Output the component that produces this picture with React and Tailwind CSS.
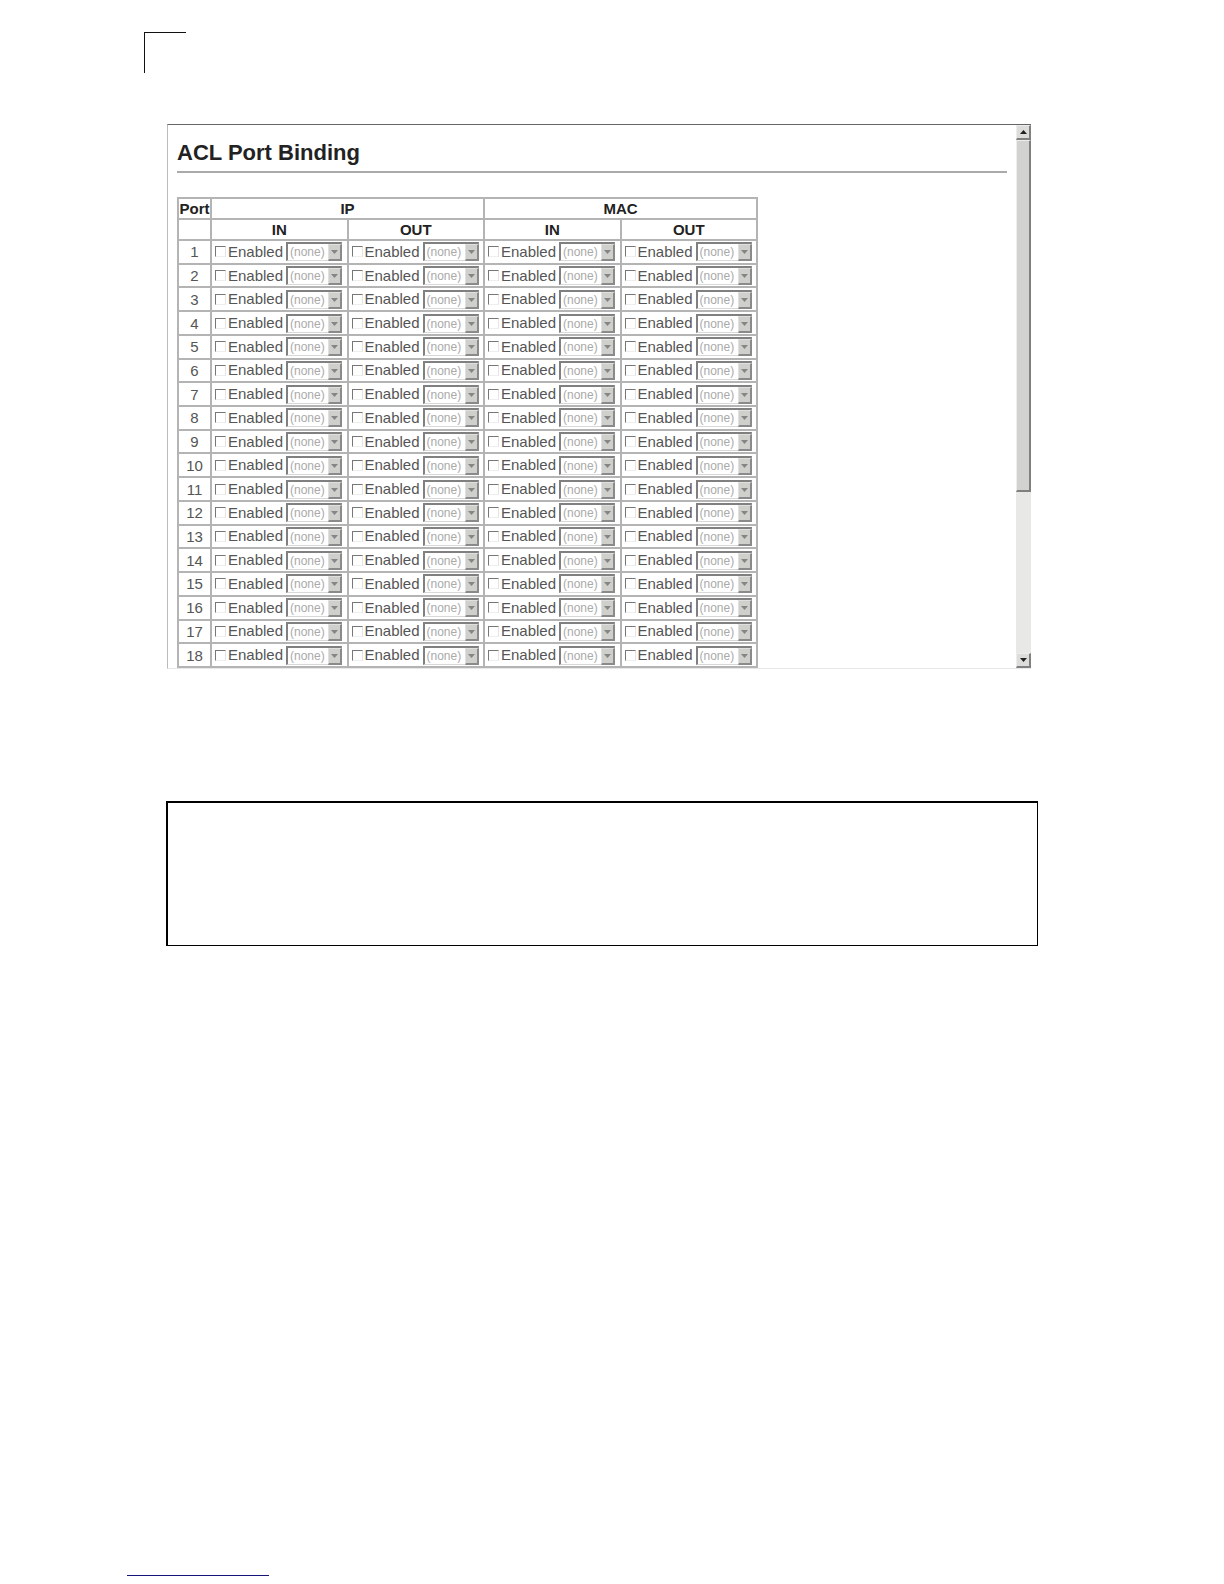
const PORTS = Array.from({ length: 18 }, (_, i) => i + 1)

const GROUPS = [
  { type: 'IP', directions: ['IN', 'OUT'] },
  { type: 'MAC', directions: ['IN', 'OUT'] },
]

const COLUMNS = GROUPS.flatMap(g => g.directions.map(d => ({ type: g.type, direction: d })))

const Arrow = ({ up = false, className }) => (
  <svg viewBox="0 0 7 4" className={className} aria-hidden="true">
    <path d={up ? 'M0 4 L3.5 0 L7 4 Z' : 'M0 0 L7 0 L3.5 4 Z'} fill="currentColor" />
  </svg>
)

const Binding = ({ port, type, direction }) => {
  const name = `${type}-${direction}-${port}`
  return (
    <div className="flex items-center pl-[3px]">
      <label className="flex items-center gap-[2px] leading-5">
        <input
          type="checkbox"
          name={name}
          className="size-[11px] appearance-none border border-t-[#777] border-l-[#777] border-r-[#e4e4e4] border-b-[#eee] bg-white checked:bg-[#555]"
        />
        <span className="w-[58px]">Enabled</span>
      </label>
      <div className="relative">
        <select
          disabled
          aria-label={`${type} ${direction} ACL for port ${port}`}
          className="block h-[19px] w-14 appearance-none border-t-2 border-r border-b border-l-2 border-t-[#808080] border-l-[#808080] border-r-[#a0a0a0] border-b-[#d8d8d8] bg-white pl-[2px] text-xs leading-[14px] text-[#aaa] opacity-100"
        >
          <option>(none)</option>
        </select>
        <span className="pointer-events-none absolute top-[2px] right-0 bottom-0 flex w-[14px] items-center justify-center border-t border-r-2 border-b-2 border-l border-t-[#e0e0e0] border-l-[#e0e0e0] border-r-[#8a8a8a] border-b-[#8a8a8a] bg-[#cfcfcb] text-[#858585]">
          <Arrow className="h-1 w-[7px]" />
        </span>
      </div>
    </div>
  )
}

const ScrollButton = ({ up, label }) => (
  <button
    type="button"
    aria-label={label}
    className="flex h-[15px] shrink-0 items-center justify-center border border-t-[#ededed] border-l-[#ededed] border-r-2 border-r-[#808080] border-b-2 border-b-[#808080] bg-[#dcdcda] text-[#222]"
  >
    <Arrow up={up} className="h-1 w-[7px]" />
  </button>
)

export default function App() {
  return (
    <main className="bg-white pt-8 pb-2 font-['Liberation_Sans',Arial,sans-serif] text-[15px] text-[#555]">
      {/* Crop mark */}
      <div className="ml-36 h-[41px] w-[42px] border-t border-l border-[#111]" />

      {/* Browser frame */}
      <section className="mt-[51px] mr-[193px] ml-[167px] flex h-[545px] overflow-hidden border-t border-l border-t-[#666] border-l-[#bbb] border-b border-b-[#e8e8e8]">
        <div className="min-w-0 flex-1 pt-[15px] pr-[9px] pl-[9px]">
          <h1 className="border-b-2 border-[#aaa] pb-[6px] text-[22px] leading-[25px] font-bold text-[#222]">ACL Port Binding</h1>

          <table className="mt-6 h-[471px] w-[581px] table-fixed border-collapse border-2 border-[#b4b4b4]">
            <colgroup>
              <col className="w-[33px]" />
              {COLUMNS.map(c => <col key={c.type + c.direction} />)}
            </colgroup>
            <thead className="text-[#222]">
              <tr className="h-[21px]">
                <th className="border-2 border-[#b4b4b4] p-0 leading-[19px]">Port</th>
                {GROUPS.map(g => (
                  <th key={g.type} colSpan={2} className="border-2 border-[#b4b4b4] p-0 leading-[19px]">{g.type}</th>
                ))}
              </tr>
              <tr className="h-[21px]">
                <th className="border-2 border-[#b4b4b4] p-0" />
                {COLUMNS.map(c => (
                  <th key={c.type + c.direction} className="border-2 border-[#b4b4b4] p-0 leading-[19px]">{c.direction}</th>
                ))}
              </tr>
            </thead>
            <tbody>
              {PORTS.map(port => (
                <tr key={port}>
                  <td className="border-2 border-[#b4b4b4] p-0 text-center leading-[19px]">{port}</td>
                  {COLUMNS.map(c => (
                    <td key={c.type + c.direction} className="border-2 border-[#b4b4b4] p-0">
                      <Binding port={port} type={c.type} direction={c.direction} />
                    </td>
                  ))}
                </tr>
              ))}
            </tbody>
          </table>
        </div>

        {/* Scrollbar */}
        <div className="flex w-[15px] shrink-0 flex-col bg-[#e8e8e7]">
          <ScrollButton up label="Scroll up" />
          <div className="h-[352px] border border-t-[#ededed] border-l-[#ededed] border-r-2 border-r-[#808080] border-b-2 border-b-[#808080] bg-[#d2d2d0]" />
          <div className="flex-1" />
          <ScrollButton label="Scroll down" />
        </div>
      </section>

      {/* Empty note box */}
      <div className="mt-[132px] mr-[186px] ml-[166px] h-[145px] border-t-2 border-r border-b border-l-2 border-black" />

      <div className="mt-[629px] ml-[127px] h-px w-[142px] bg-[#14147a]" />
    </main>
  )
}
